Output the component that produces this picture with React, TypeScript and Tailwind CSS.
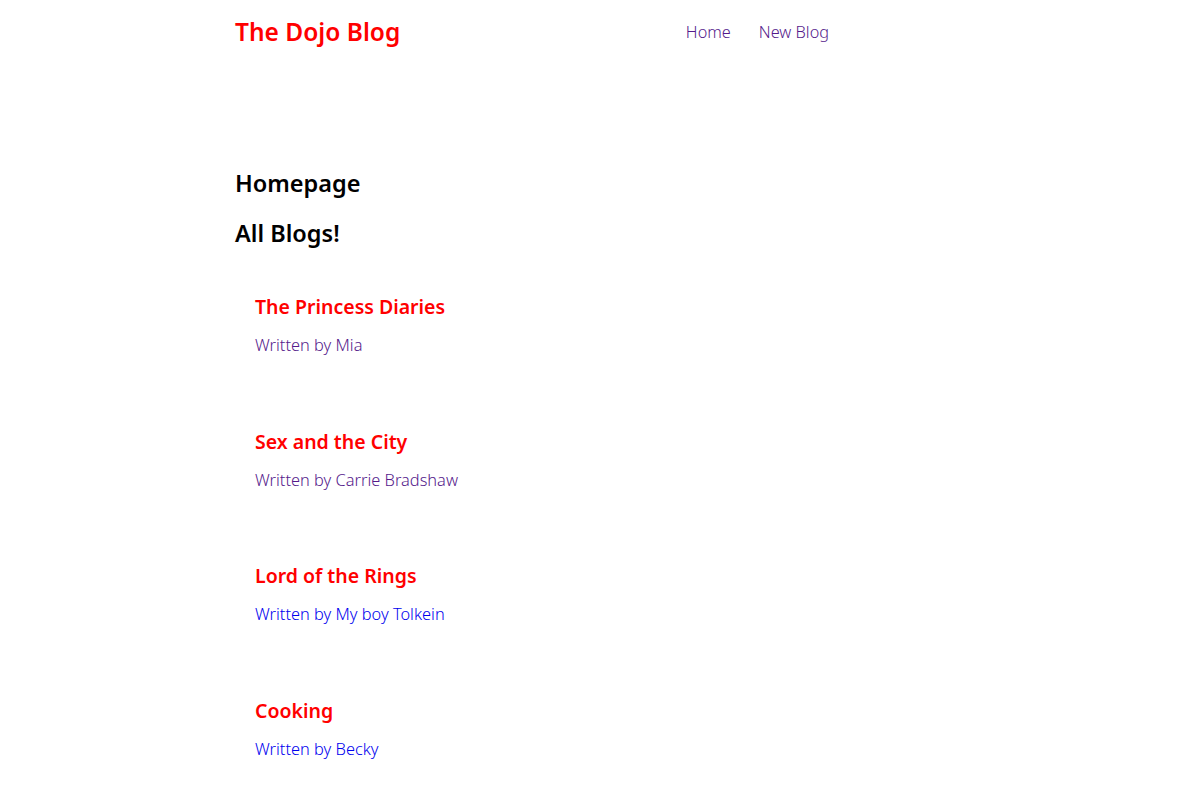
import React from "react";

const blogs = [
  { title: "The Princess Diaries", author: "Mia", visited: true },
  { title: "Sex and the City", author: "Carrie Bradshaw", visited: true },
  { title: "Lord of the Rings", author: "My boy Tolkein", visited: false },
  { title: "Cooking", author: "Becky", visited: false },
];

export default function App() {
  return (
    <div className="min-h-screen bg-white" style={{ fontFamily: '"Noto Sans", sans-serif' }}>
      <div className="w-[708px] mx-auto">
        <nav className="h-16 flex items-center justify-between pr-[114px]">
          <h1 className="text-[24.5px] font-semibold text-[#ff0000] leading-8">The Dojo Blog</h1>
          <div className="flex gap-[28px] text-[16.3px] text-[#551a8b] font-light">
            <a href="#">Home</a>
            <a href="#">New Blog</a>
          </div>
        </nav>
        <div className="mt-[103px]">
          <h2 className="text-[23.5px] font-semibold leading-8 text-black">Homepage</h2>
          <h2 className="mt-[18px] text-[23.5px] font-semibold leading-8 text-black">All Blogs!</h2>
          <div className="mt-[44px] flex flex-col gap-[70.5px]">
            {blogs.map((b) => (
              <div key={b.title} className="pl-5">
                <h3 className="text-[19.5px] font-semibold leading-7 text-[#ff0000]">{b.title}</h3>
                <p
                  className={
                    "mt-3 text-[16.4px] leading-6 font-light " +
                    (b.visited ? "text-[#551a8b]" : "text-[#0000ee]")
                  }
                >
                  Written by {b.author}
                </p>
              </div>
            ))}
          </div>
        </div>
      </div>
    </div>
  );
}
